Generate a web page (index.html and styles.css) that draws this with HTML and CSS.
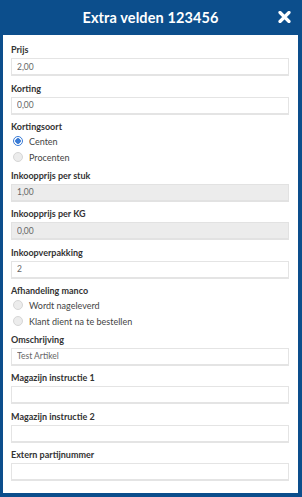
FILE: index.html
```html
<!DOCTYPE html>
<html lang="nl">
<head>
    <meta charset="UTF-8">
    <meta name="viewport" content="width=device-width, initial-scale=1.0">
    <title>Extra velden 123456</title>
    <link rel="stylesheet" href="styles.css">
</head>
<body>
    <div class="modal">
        <header class="modal-header">
            <h1>Extra velden 123456</h1>
            <button class="close" type="button" aria-label="Sluiten">
                <svg width="13" height="12" viewBox="0 0 13 12"><path d="M2 1.5 L11 10.5 M11 1.5 L2 10.5" stroke="#fff" stroke-width="3.2" stroke-linecap="round"/></svg>
            </button>
        </header>
        <form class="modal-body">
            <div class="field">
                <label>Prijs</label>
                <input type="text" value="2,00">
            </div>
            <div class="field">
                <label>Korting</label>
                <input type="text" value="0,00">
            </div>
            <div class="field choice">
                <label>Kortingsoort</label>
                <div class="radio"><span class="dot checked"></span>Centen</div>
                <div class="radio"><span class="dot"></span>Procenten</div>
            </div>
            <div class="field">
                <label>Inkoopprijs per stuk</label>
                <input type="text" value="1,00" readonly>
            </div>
            <div class="field">
                <label>Inkoopprijs per KG</label>
                <input type="text" value="0,00" readonly>
            </div>
            <div class="field">
                <label>Inkoopverpakking</label>
                <input type="text" value="2">
            </div>
            <div class="field choice">
                <label>Afhandeling manco</label>
                <div class="radio"><span class="dot"></span>Wordt nageleverd</div>
                <div class="radio"><span class="dot"></span>Klant dient na te bestellen</div>
            </div>
            <div class="field">
                <label>Omschrijving</label>
                <input type="text" value="Test Artikel">
            </div>
            <div class="field">
                <label>Magazijn instructie 1</label>
                <input type="text" value="">
            </div>
            <div class="field">
                <label>Magazijn instructie 2</label>
                <input type="text" value="">
            </div>
            <div class="field">
                <label>Extern partijnummer</label>
                <input type="text" value="">
            </div>
        </form>
    </div>
</body>
</html>
```
FILE: styles.css
```css
body {
    margin: 0;
    font-family: Lato, "Open Sans", sans-serif;
    color: #333;
}
.modal {
    width: 302px;
    height: 497px;
    box-sizing: border-box;
    background: #fff;
    border: solid #0c4e8c;
    border-width: 0 4px 4px 3px;
    overflow: hidden;
}
.modal-header {
    height: 35px;
    background: #0c4e8c;
    display: flex;
    align-items: center;
    justify-content: center;
    position: relative;
}
.modal-header h1 {
    margin: 0;
    color: #fff;
    font-size: 14.5px;
    font-weight: 700;
    letter-spacing: 0.1px;
}
.close {
    position: absolute;
    right: 7px;
    top: 11px;
    background: none;
    border: 0;
    padding: 0;
    line-height: 0;
}
.modal-body {
    padding: 9px 9px 0 8px;
    display: flex;
    flex-direction: column;
}
.field {
    display: flex;
    flex-direction: column;
    margin-bottom: 6.5px;
}
.field label {
    font-size: 9px;
    font-weight: 700;
    line-height: 12px;
    margin-bottom: 2px;
}
.field input {
    height: 18px;
    box-sizing: border-box;
    border: 1px solid #e4e4e4;
    border-bottom-width: 2px;
    padding: 0 5px;
    font-family: inherit;
    font-size: 8.5px;
    color: #666;
    background: #fff;
    outline: none;
}
.field input[readonly] {
    background: #ececec;
    border-color: #e2e2e2;
}
.field.choice {
    margin-bottom: 4.5px;
}
.field.choice label {
    margin-bottom: 0;
}
.radio {
    display: flex;
    align-items: center;
    height: 16px;
    font-size: 9px;
    color: #444;
    padding-left: 2px;
}
.dot {
    width: 8px;
    height: 8px;
    border-radius: 50%;
    border: 1px solid #d6d6d6;
    background: #ececec;
    margin-right: 6px;
    box-sizing: content-box;
}
.dot.checked {
    border-color: #3a7bd5;
    background: radial-gradient(circle, #3a7bd5 0 2.5px, #fff 3px);
}
```
